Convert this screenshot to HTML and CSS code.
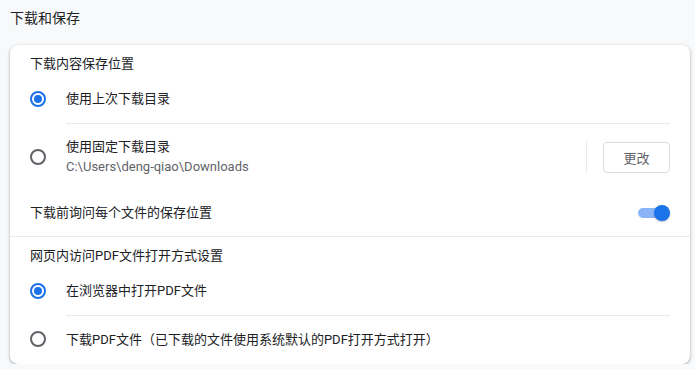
FILE: index.html
```html
<!DOCTYPE html>
<html lang="zh-CN">
<head>
<meta charset="utf-8">
<link rel="stylesheet" href="styles.css">
</head>
<body>
<div class="page">
  <h1 class="title">下载和保存</h1>
  <div class="card">
    <div class="section-head">下载内容保存位置</div>
    <div class="radio-row">
      <span class="radio checked"></span>
      <div class="label">使用上次下载目录</div>
    </div>
    <div class="radio-row tall">
      <span class="radio"></span>
      <div class="label sep">
        <div class="label-text">
          <div>使用固定下载目录</div>
          <div class="sub">C:\Users\deng-qiao\Downloads</div>
        </div>
        <div class="vsep"></div>
        <button class="btn">更改</button>
      </div>
    </div>
    <div class="toggle-row">
      <div class="toggle-label">下载前询问每个文件的保存位置</div>
      <span class="toggle"><span class="knob"></span></span>
    </div>
    <div class="section-head second">网页内访问PDF文件打开方式设置</div>
    <div class="radio-row">
      <span class="radio checked"></span>
      <div class="label">在浏览器中打开PDF文件</div>
    </div>
    <div class="radio-row">
      <span class="radio"></span>
      <div class="label sep">下载PDF文件（已下载的文件使用系统默认的PDF打开方式打开）</div>
    </div>
  </div>
</div>
</body>
</html>
```

FILE: styles.css
```css
html, body {
  margin: 0;
  padding: 0;
  background: #f8f9fa;
}
body {
  font-family: Roboto, "Noto Sans CJK SC", sans-serif;
  color: #202124;
  font-size: 13px;
}
.page {
  padding: 0 5px 0 10px;
}
.title {
  margin: 0;
  font-size: 14px;
  font-weight: 400;
  line-height: 20px;
  padding-top: 8px;
  height: 45px;
  box-sizing: border-box;
}
.card {
  background: #fff;
  border-radius: 8px;
  box-shadow: 0 1px 2px rgba(60,64,67,.3), 0 1px 3px 1px rgba(60,64,67,.15);
  padding-bottom: 1px;
}
.section-head {
  padding: 9px 20px 0 20px;
  line-height: 20px;
  height: 30px;
  box-sizing: border-box;
}
.section-head.second {
  border-top: 1px solid #e8eaed;
  height: 31px;
}
.radio-row {
  display: flex;
  align-items: stretch;
  padding: 0 20px;
  height: 48px;
}
.radio-row.tall {
  height: 67px;
}
.radio {
  flex: none;
  width: 16px;
  height: 16px;
  box-sizing: border-box;
  border: 2px solid #5f6368;
  border-radius: 50%;
  align-self: center;
  margin-right: 20px;
  display: flex;
  align-items: center;
  justify-content: center;
}
.radio.checked {
  border-color: #1a73e8;
}
.radio.checked::after {
  content: "";
  width: 8px;
  height: 8px;
  border-radius: 50%;
  background: #1a73e8;
}
.label {
  flex: 1;
  display: flex;
  align-items: center;
  line-height: 20px;
}
.label.sep {
  border-top: 1px solid #e8eaed;
}
.label-text {
  flex: 1;
}
.sub {
  color: #5f6368;
  font-size: 13px;
}
.vsep {
  width: 1px;
  height: 32px;
  background: #e8eaed;
  margin-right: 16px;
}
.btn {
  width: 67px;
  height: 31px;
  background: #fff;
  border: 1px solid #dadce0;
  border-radius: 4px;
  font-family: "Noto Sans CJK SC", sans-serif;
  font-size: 13px;
  color: #5f6368;
  padding: 0;
}
.toggle-row {
  display: flex;
  align-items: center;
  justify-content: space-between;
  padding: 0 20px;
  height: 46px;
  line-height: 20px;
}
.toggle {
  position: relative;
  width: 28px;
  height: 10px;
  border-radius: 5px;
  background: #8ab4f8;
  margin-right: 4px;
}
.knob {
  position: absolute;
  right: -4px;
  top: -3px;
  width: 16px;
  height: 16px;
  border-radius: 50%;
  background: #1a73e8;
  box-shadow: 0 1px 2px rgba(0,0,0,.25);
}
```
